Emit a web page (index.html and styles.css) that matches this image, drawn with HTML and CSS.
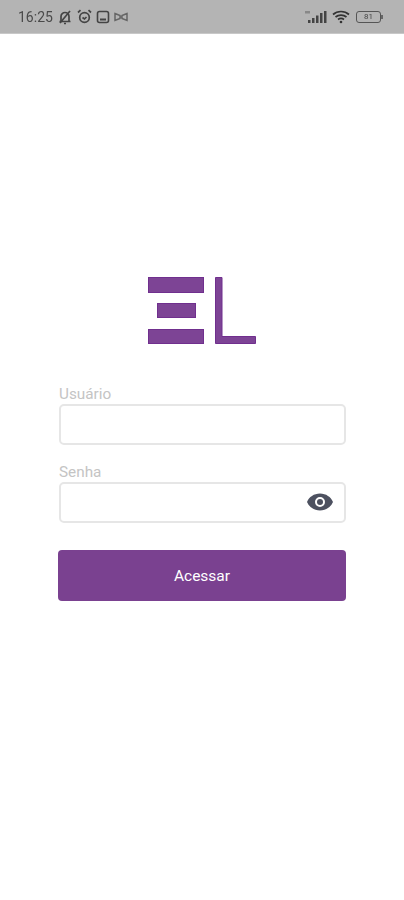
FILE: index.html
```html
<!DOCTYPE html>
<html lang="en">
<head>
    <meta charset="UTF-8">
    <meta name="viewport" content="width=device-width, initial-scale=1.0">
    <title>Login</title>
    <link rel="stylesheet" href="styles.css">
</head>
<body>
    <div class="status-bar">
        <div class="status-left">
            <span class="status-time">16:25</span>
            <!-- muted alarm -->
            <svg class="status-icon" width="16" height="16" viewBox="0 0 16 16" fill="none" stroke="#444" stroke-width="1.7">
                <path d="M4 12 V7.5 C4 5 6 3.5 8 3.5 C10 3.5 12 5 12 7.5 V12 M2.5 12.5 H13.5"/>
                <path d="M3 14 L13 2"/>
                <path d="M7 14.5 H9"/>
            </svg>
            <!-- alarm clock -->
            <svg class="status-icon" width="15" height="15" viewBox="0 0 15 15" fill="none" stroke="#444" stroke-width="1.7">
                <circle cx="7.5" cy="8.5" r="4.8"/>
                <path d="M1 3.5 L3.5 1.2 M14 3.5 L11.5 1.2 M5.5 8.5 L7.5 10 L9.5 8"/>
            </svg>
            <!-- sim box -->
            <svg class="status-icon" width="14" height="14" viewBox="0 0 14 14" fill="none" stroke="#444" stroke-width="1.6">
                <rect x="1.5" y="1.5" width="11" height="11" rx="2"/>
                <path d="M4 9.5 H10" stroke-width="2"/>
            </svg>
            <!-- link -->
            <svg class="status-icon" width="14" height="10" viewBox="0 0 14 10" fill="none" stroke="#666" stroke-width="1.5">
                <path d="M1 1.5 L6 3.5 V6.5 L1 8.5 Z M13 1.5 L8 3.5 V6.5 L13 8.5 Z M6 5 H8"/>
            </svg>
        </div>
        <div class="status-right">
            <svg width="22" height="14" viewBox="0 0 22 14" fill="#444">
                <rect x="3" y="10" width="2.5" height="3"/>
                <rect x="7" y="8" width="2.5" height="5"/>
                <rect x="11" y="5.5" width="2.5" height="7.5"/>
                <rect x="15" y="3" width="2.5" height="10"/>
                <rect x="19" y="1" width="2.5" height="12"/>
                <rect x="0" y="1" width="5" height="2.5" fill="#888"/>
            </svg>
            <svg width="18" height="14" viewBox="0 0 18 14" fill="none" stroke="#333" stroke-width="1.7">
                <path d="M1 4.5 C5.5 0.5 12.5 0.5 17 4.5"/>
                <path d="M3.5 7 C6.5 4.5 11.5 4.5 14.5 7"/>
                <path d="M6 9.5 C7.8 8.2 10.2 8.2 12 9.5"/>
                <circle cx="9" cy="12" r="1.3" fill="#333" stroke="none"/>
            </svg>
            <div class="battery-wrap">
                <div class="battery"><span class="battery-level">81</span></div>
                <span class="battery-nub"></span>
            </div>
        </div>
    </div>

    <main class="login">
        <svg class="logo" width="108" height="67" viewBox="0 0 108 67">
            <rect class="logo-bar" x="0.5" y="0.5" width="55" height="15"/>
            <rect class="logo-bar" x="9.5" y="26.5" width="38" height="14"/>
            <rect class="logo-bar" x="0.5" y="52.5" width="55" height="14"/>
            <path class="logo-bar" d="M67.5 0.5 H74 V59.5 H107.5 V66.5 H67.5 Z"/>
        </svg>

        <form class="login-form">
            <label class="field-label" for="usuario">Usuário</label>
            <div class="field">
                <input class="field-input" id="usuario" type="text">
            </div>

            <label class="field-label field-label-second" for="senha">Senha</label>
            <div class="field">
                <input class="field-input" id="senha" type="password">
                <svg class="field-eye" width="28" height="20" viewBox="0 0 28 20">
                    <path fill="#4d5160" fill-rule="evenodd" d="M14 1.5 C8 1.5 3 5 1 10 C3 15 8 18.5 14 18.5 C20 18.5 25 15 27 10 C25 5 20 1.5 14 1.5 Z M14 15 A5 5 0 1 1 14 5 A5 5 0 1 1 14 15 Z"/>
                    <circle cx="14" cy="10" r="3" fill="#4d5160"/>
                </svg>
            </div>

            <button class="submit" type="button">Acessar</button>
        </form>
    </main>
</body>
</html>
```

FILE: styles.css
```css
body {
    margin: 0;
    background-color: #ffffff;
    font-family: 'Roboto', sans-serif;
    color: #333;
}
.status-bar {
    display: flex;
    justify-content: space-between;
    align-items: center;
    height: 34px;
    padding: 0 21px 0 18px;
    background-color: #b4b4b4;
    border-bottom: 1px solid #c8c8c8;
    box-sizing: border-box;
}
.status-left,
.status-right {
    display: flex;
    align-items: center;
    gap: 4px;
    filter: blur(0.5px);
}
.status-right {
    gap: 5px;
}
.status-time {
    font-size: 14px;
    color: #4a4a4a;
}
.status-icon {
    flex-shrink: 0;
}
.battery-wrap {
    display: flex;
    align-items: center;
    margin-left: 1px;
}
.battery {
    display: flex;
    align-items: center;
    justify-content: center;
    width: 23px;
    height: 10px;
    border: 1px solid #555;
    border-radius: 3px;
}
.battery-nub {
    width: 2px;
    height: 4px;
    background-color: #666;
}
.battery-level {
    font-size: 8px;
    color: #444;
}
.login {
    display: flex;
    flex-direction: column;
    padding: 243px 58px 0 59px;
}
.logo {
    align-self: flex-start;
    margin-left: 89px;
    filter: blur(0.4px);
}
.logo-bar {
    fill: #7d4495;
    stroke: #702f8e;
    stroke-width: 1;
}
.login-form {
    display: flex;
    flex-direction: column;
    margin-top: 42px;
}
.field-label {
    font-size: 15.3px;
    line-height: 17px;
    color: #c4c4c4;
    margin-bottom: 1px;
}
.field-label-second {
    margin-top: 19px;
}
.field {
    position: relative;
    height: 41px;
}
.field-input {
    display: block;
    width: 100%;
    height: 100%;
    box-sizing: border-box;
    border: 2.5px solid #e6e6e6;
    border-radius: 5px;
    background: #fff;
}
.field-eye {
    position: absolute;
    top: 10px;
    right: 12px;
}
.submit {
    height: 51px;
    margin: 27px 0 0 -1px;
    border: none;
    border-radius: 4px;
    background-color: #7a4190;
    color: #fff;
    font-family: 'Roboto', sans-serif;
    font-size: 15.5px;
}
```
